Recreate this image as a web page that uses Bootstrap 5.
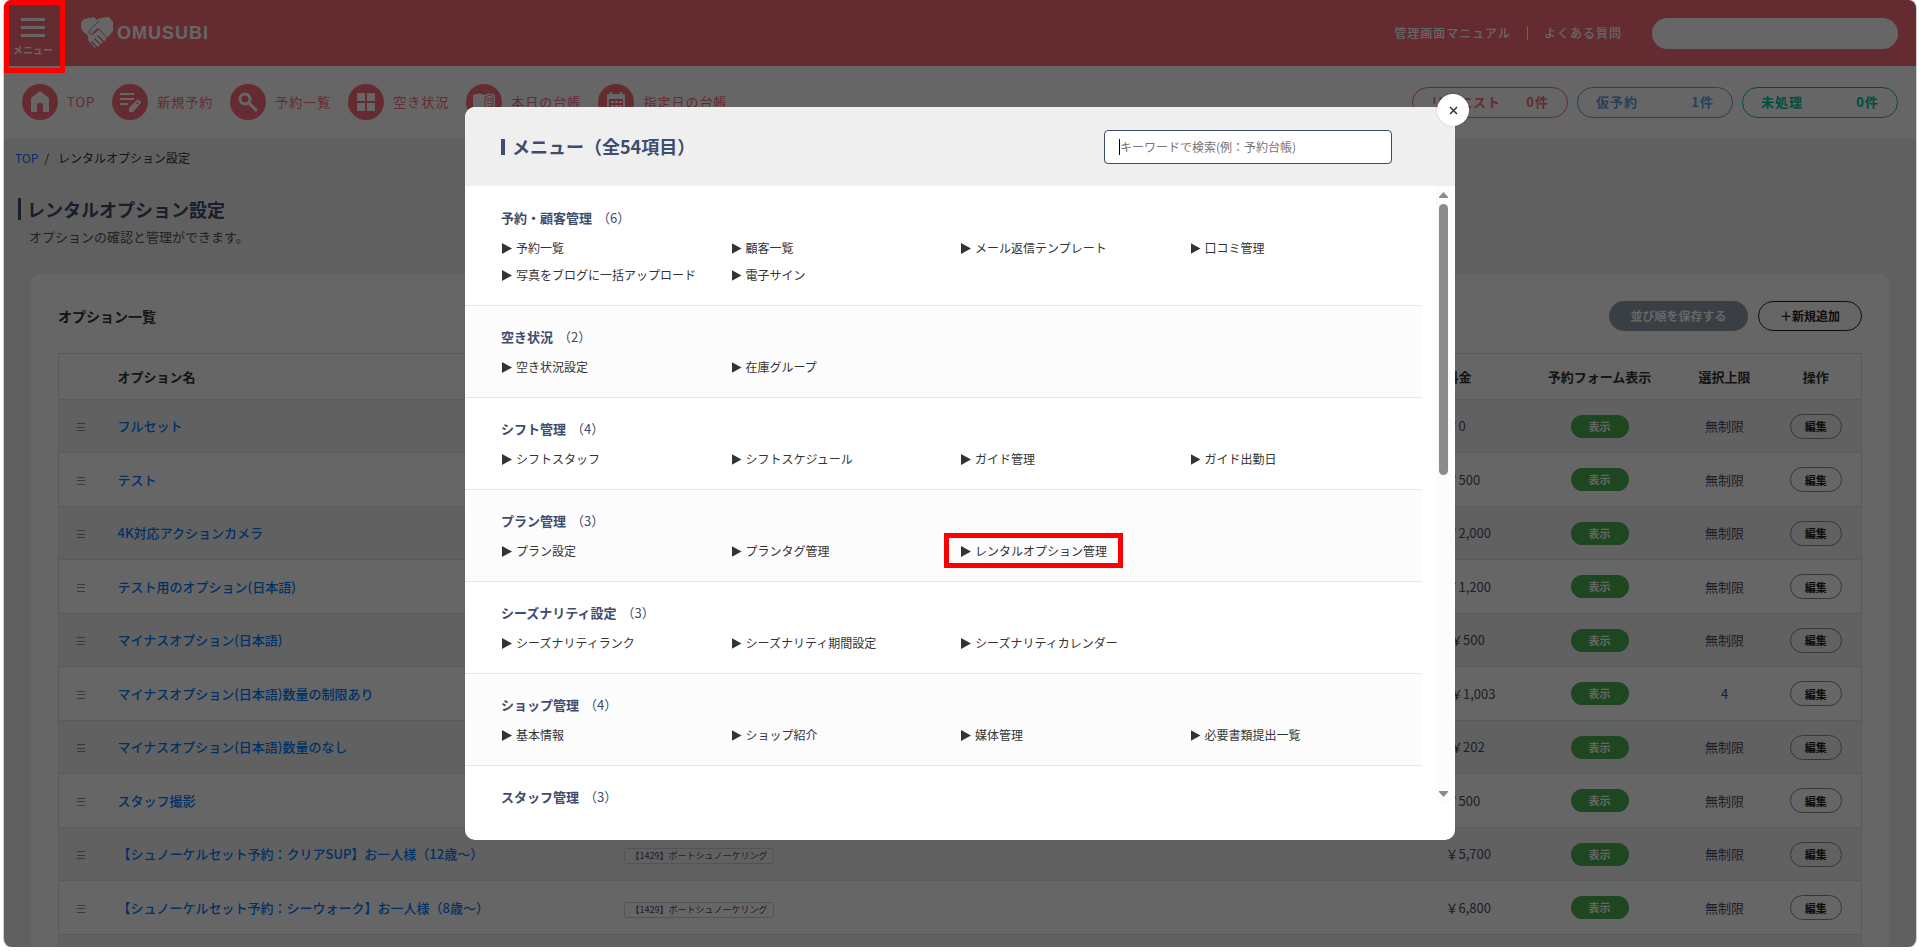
<!DOCTYPE html>
<html lang="ja">
<head>
<meta charset="utf-8">
<meta name="viewport" content="width=device-width, initial-scale=1">
<title>レンタルオプション設定</title>
<link href="https://cdn.jsdelivr.net/npm/bootstrap@5.3.0/dist/css/bootstrap.min.css" rel="stylesheet">
<style>
:root{--brand:#fa6c78;--navy:#3e4c6d}
body{font-family:"Noto Sans CJK JP","Noto Sans",sans-serif;font-size:13px;line-height:20px;color:#333;background:#fff;overflow:hidden}
a{text-decoration:none}
.app-window{height:calc(100vh - 4px);margin:0 4px;border-radius:8px;box-shadow:0 0 0 1px #d0d0d0;background:#f0f0f0}
/* top bar */
.topbar{height:66px;background:var(--brand);color:#fff;padding:0 18px 0 6px}
.menu-btn{width:46px;font-size:10px;line-height:14px;font-weight:700;color:#fff;gap:6px}
.menu-bars{gap:5px}
.menu-bars i{display:block;width:24px;height:3px;background:#fff}
.brand-link{gap:4px;color:#fff;font:700 18px/24px "Liberation Sans",sans-serif;letter-spacing:1px}
.top-links{font-size:12px;letter-spacing:1px;font-weight:500}
.top-links a{color:#fff}
.top-links .sep{width:1px;height:14px;background:#fff}
.account-box{width:246px;height:31px;margin-left:30px;background:#fff}
/* quick navigation */
.quickbar{height:72px;background:#fff;padding:0 18px}
.quick-list{gap:17px}
.quick-link{color:var(--brand);letter-spacing:1px;gap:9px}
.quick-icon{width:36px;height:36px;background:var(--brand)}
.status-list{gap:9px}
.status-pill{width:156px;height:31px;border:1px solid;padding:0 18px;font-weight:700;letter-spacing:1px}
.st-request{color:var(--brand)}.st-hold{color:#5fa4e6}.st-todo{color:#00c0a0}
/* page head */
.crumbs{font-size:12px;padding:10px 11px 0}
.crumbs .slash{margin:0 9px 0 6px}
.crumbs a,.name-link{color:#007bff}
.page-head{padding:30px 14px 0}
.page-head h1{font-size:18px;line-height:22px;font-weight:700;color:var(--navy);border-left:3px solid;padding-left:6px;margin:0 0 7px}
.page-head p{padding-left:11px;margin:0 0 27px;color:#555}
/* list card */
.list-card{margin:0 27px;padding:27px 27px 0;background:#fff;border-radius:9px}
.list-card h2{font-size:14px;line-height:30px;font-weight:700;margin:0}
.card-actions{gap:10px}
.btn-save,.btn-add{height:30px;font-size:12px;line-height:20px;font-weight:700;padding:0}
.btn-save{width:139px;background:#8e9daa;color:#fff}
.btn-add{width:104px;border:1px solid #222;color:#222}
.opt-table{table-layout:fixed;margin-top:22px;border:1px solid #dee2e6}
.opt-table th,.opt-table td{padding:0 18px;border-bottom:1px solid #dee2e6;white-space:nowrap;vertical-align:middle}
.opt-table th{height:46px;font-weight:700;color:#333}
.opt-table td{height:53px;color:#4a5068}
.opt-table tbody tr:nth-child(even) td{height:54px}
.opt-table tbody tr:nth-child(odd){background:#f2f2f2}
.opt-table .ctr{padding:0;text-align:center}
.c-grip{width:41px}.c-name{width:506px}.c-price{width:93px}.c-show{width:158px}.c-max{width:92px}.c-op{width:91px}
.grip{width:8px;height:8px;border-top:1px solid #8890a0;border-bottom:1px solid #8890a0;background:linear-gradient(#8890a0,#8890a0) center/100% 1px no-repeat;margin-top:2px}
.name-link{font-weight:500}
.shown{width:58px;height:23px;line-height:23px;background:#4caf50;color:#fff;font-size:11px;font-weight:700}
.btn-edit{width:52px;height:25px;padding:0;border:1px solid #888;font-size:11px;line-height:20px;font-weight:700;color:#222}
.plan-tag{font-size:9px;line-height:14px;border:1px solid #c9d1d6;border-radius:3px;padding:0 6px}
/* menu dialog */
.shade{background:rgba(0,0,0,.6)}
.menu-dialog{width:990px;height:calc(100vh - 218px);background:#fff;border-radius:10px}
.dialog-head{height:79px;background:#efefef;border-radius:10px 10px 0 0;padding:0 63px 0 36px}
.dialog-head h2{font-size:18px;font-weight:700;color:var(--navy);margin:0;gap:7px}
.dialog-head h2::before{content:"";width:4px;height:16px;background:var(--navy)}
.search-input{width:288px;height:34px;font-size:12px;border:1px solid var(--navy);border-radius:4px;padding:0 15px}
.search-input:focus{border-color:var(--navy);box-shadow:none}
.search-input::placeholder{color:#757575}
.caret{left:15px;top:9px;width:1px;height:16px;background:#000}
.close-btn{top:-13px;right:-14px;width:32px;height:32px;background:#fff;box-shadow:0 0 2px rgba(0,0,0,.2)}
.dialog-body{min-height:0;margin-bottom:30px;padding-top:1px}
.menu-group{padding:21px 3px 17px 36px;border-bottom:1px solid #e6e6e6}
.menu-group:nth-child(even){background:#fcfcfc}
.menu-group h3{font-size:13px;line-height:20px;font-weight:700;color:var(--navy);margin:0 0 6px}
.menu-group h3 span{font-weight:400;margin-left:5px}
.menu-grid{display:grid;grid-template-columns:repeat(4,1fr)}
.menu-grid a{font-size:12px;line-height:27px;color:#333;white-space:nowrap;justify-self:start;position:relative}
.menu-grid a::before{content:"";display:inline-block;width:10px;height:11px;margin:0 4px 0 1px;background:currentColor;clip-path:polygon(0 0,100% 50%,0 100%);vertical-align:-1px}
.picked::after{content:"";position:absolute;inset:-4px -16px;border:5px solid red}
.scroll-rail{width:15px;margin:0 4px 8px 14px;background:#fcfcfc;padding:5px 0}
.scroll-thumb{width:9px;height:271px;background:#8b8b8b;margin-top:6px}
.menu-mark{top:0;left:0;width:61px;height:73px;border:5px solid red}
</style>
</head>
<body>
<div class="app-window position-relative overflow-hidden">
  <header class="topbar d-flex align-items-center">
    <button type="button" class="menu-btn btn p-0 border-0 rounded-0 d-flex flex-column align-items-center mt-2">
      <span class="menu-bars d-flex flex-column"><i></i><i></i><i></i></span>
      <span>メニュー</span>
    </button>
    <a href="#" class="brand-link d-flex align-items-center ms-4">
      <svg width="33" height="32" viewBox="0 0 33 32" aria-hidden="true">
        <path fill="#fff" d="M1 5 4 2 14 0 17 3 20 1 29 0 33 5V14L27 20 18 11 14 14Q12 16 10 14L17 6 16 5 5 16Q1 13 1 9Z"/>
        <path fill="#fff" d="M18 4 21 2 29 1 33 6 32 15 27 21 24 18 28 13 29 8 25 5 20 6 12 15 15 16 19 12 26 20 26 23 24 24 18 18 17 19 23 25 21 27 15 21 14 22 20 28 18 30 12 24 11 25 16 30 15 31 8 23 8 19 4 15 3 9Z"/>
        <path fill="none" stroke="#fa6c78" stroke-width="1" d="M19 4 9 14Q9 18 13 17L19 12 27 21"/>
      </svg>OMUSUBI
    </a>
    <nav class="top-links d-flex align-items-center ms-auto">
      <a href="#">管理画面マニュアル</a><span class="sep mx-3"></span><a href="#">よくある質問</a>
    </nav>
    <div class="account-box rounded-pill"></div>
  </header>

  <div class="quickbar d-flex align-items-center justify-content-between">
    <nav class="quick-list d-flex">
      <a href="#" class="quick-link d-flex align-items-center"><span class="quick-icon rounded-circle d-flex"><svg class="m-auto" width="20" height="22" viewBox="0 0 20 22"><path fill="#fff" d="M10 0 1 7V21H7V14Q7 12 9 12H11Q13 12 13 14V21H19V7Z"/></svg></span>TOP</a>
      <a href="#" class="quick-link d-flex align-items-center"><span class="quick-icon rounded-circle d-flex"><svg class="m-auto" width="22" height="22" viewBox="0 0 22 22"><path stroke="#fff" stroke-width="2" d="M1 3H15M1 8H15M1 13H9"/><path fill="#fff" fill-rule="evenodd" d="M10 17 18 9Q20 8 21 10 23 11 21 13L14 21H10ZM18 11 17 12 19 13 20 12Z"/></svg></span>新規予約</a>
      <a href="#" class="quick-link d-flex align-items-center"><span class="quick-icon rounded-circle d-flex"><svg class="m-auto" width="20" height="20" viewBox="0 0 20 20" fill="none" stroke="#fff" stroke-width="3"><circle cx="7" cy="7" r="5"/><path d="m11 11 8 8"/></svg></span>予約一覧</a>
      <a href="#" class="quick-link d-flex align-items-center"><span class="quick-icon rounded-circle d-flex"><svg class="m-auto" width="18" height="18" viewBox="0 0 18 18" fill="#fff"><path d="M0 0H8V8H0ZM10 0H18V8H10ZM0 10H8V18H0ZM10 10H18V18H10Z"/></svg></span>空き状況</a>
      <a href="#" class="quick-link d-flex align-items-center"><span class="quick-icon rounded-circle d-flex"><svg class="m-auto" width="22" height="18" viewBox="0 0 22 18"><path fill="#fff" d="M0 2Q6-1 11 2 16-1 22 2V17Q16 14 11 17 6 14 0 17Z"/><path fill="none" stroke="#fa6c78" d="M12 4Q16 1 20 3V14Q16 12 12 15ZM14 6Q16 5 19 6M14 8Q16 7 19 8M14 11Q16 10 19 11"/></svg></span>本日の台帳</a>
      <a href="#" class="quick-link d-flex align-items-center"><span class="quick-icon rounded-circle d-flex"><svg class="m-auto" width="18" height="20" viewBox="0 0 18 20"><path fill="#fff" d="M3 0H5V2H13V0H15V2H18V20H0V2H3Z"/><path fill="#fa6c78" d="M2 7H16V18H2Z"/><path fill="#fff" d="M4 9H7V11H4ZM8 9H11V11H8ZM12 9H15V11H12ZM4 13H7V15H4ZM8 13H11V15H8ZM12 13H15V15H12Z"/></svg></span>指定日の台帳</a>
    </nav>
    <div class="status-list d-flex">
      <a href="#" class="status-pill st-request rounded-pill d-flex align-items-center justify-content-between"><span>リクエスト</span><span>0件</span></a>
      <a href="#" class="status-pill st-hold rounded-pill d-flex align-items-center justify-content-between"><span>仮予約</span><span>1件</span></a>
      <a href="#" class="status-pill st-todo rounded-pill d-flex align-items-center justify-content-between"><span>未処理</span><span>0件</span></a>
    </div>
  </div>

  <main>
    <div class="crumbs d-flex"><a href="#">TOP</a><span class="slash">/</span><span>レンタルオプション設定</span></div>
    <div class="page-head">
      <h1>レンタルオプション設定</h1>
      <p>オプションの確認と管理ができます。</p>
    </div>
    <section class="list-card">
      <div class="d-flex justify-content-between">
        <h2>オプション一覧</h2>
        <div class="card-actions d-flex">
          <button type="button" class="btn btn-save rounded-pill">並び順を保存する</button>
          <button type="button" class="btn btn-add rounded-pill">＋新規追加</button>
        </div>
      </div>
      <table class="opt-table w-100">
        <thead><tr><th class="c-grip"></th><th class="c-name">オプション名</th><th></th><th class="c-price">料金</th><th class="c-show ctr">予約フォーム表示</th><th class="c-max ctr">選択上限</th><th class="c-op ctr">操作</th></tr></thead>
        <tbody>
          <tr><td><div class="grip"></div></td><td><a class="name-link" href="#">フルセット</a></td><td></td><td>￥0</td><td class="ctr"><span class="shown rounded-pill d-inline-block">表示</span></td><td class="ctr">無制限</td><td class="ctr"><button type="button" class="btn btn-edit rounded-pill">編集</button></td></tr>
          <tr><td><div class="grip"></div></td><td><a class="name-link" href="#">テスト</a></td><td></td><td>￥500</td><td class="ctr"><span class="shown rounded-pill d-inline-block">表示</span></td><td class="ctr">無制限</td><td class="ctr"><button type="button" class="btn btn-edit rounded-pill">編集</button></td></tr>
          <tr><td><div class="grip"></div></td><td><a class="name-link" href="#">4K対応アクションカメラ</a></td><td></td><td>￥2,000</td><td class="ctr"><span class="shown rounded-pill d-inline-block">表示</span></td><td class="ctr">無制限</td><td class="ctr"><button type="button" class="btn btn-edit rounded-pill">編集</button></td></tr>
          <tr><td><div class="grip"></div></td><td><a class="name-link" href="#">テスト用のオプション(日本語)</a></td><td></td><td>￥1,200</td><td class="ctr"><span class="shown rounded-pill d-inline-block">表示</span></td><td class="ctr">無制限</td><td class="ctr"><button type="button" class="btn btn-edit rounded-pill">編集</button></td></tr>
          <tr><td><div class="grip"></div></td><td><a class="name-link" href="#">マイナスオプション(日本語)</a></td><td></td><td>-￥500</td><td class="ctr"><span class="shown rounded-pill d-inline-block">表示</span></td><td class="ctr">無制限</td><td class="ctr"><button type="button" class="btn btn-edit rounded-pill">編集</button></td></tr>
          <tr><td><div class="grip"></div></td><td><a class="name-link" href="#">マイナスオプション(日本語)数量の制限あり</a></td><td></td><td>-￥1,003</td><td class="ctr"><span class="shown rounded-pill d-inline-block">表示</span></td><td class="ctr">4</td><td class="ctr"><button type="button" class="btn btn-edit rounded-pill">編集</button></td></tr>
          <tr><td><div class="grip"></div></td><td><a class="name-link" href="#">マイナスオプション(日本語)数量のなし</a></td><td></td><td>-￥202</td><td class="ctr"><span class="shown rounded-pill d-inline-block">表示</span></td><td class="ctr">無制限</td><td class="ctr"><button type="button" class="btn btn-edit rounded-pill">編集</button></td></tr>
          <tr><td><div class="grip"></div></td><td><a class="name-link" href="#">スタッフ撮影</a></td><td></td><td>￥500</td><td class="ctr"><span class="shown rounded-pill d-inline-block">表示</span></td><td class="ctr">無制限</td><td class="ctr"><button type="button" class="btn btn-edit rounded-pill">編集</button></td></tr>
          <tr><td><div class="grip"></div></td><td><a class="name-link" href="#">【シュノーケルセット予約：クリアSUP】お一人様（12歳〜）</a></td><td><span class="plan-tag d-inline-block">【1429】ボートシュノーケリング</span></td><td>￥5,700</td><td class="ctr"><span class="shown rounded-pill d-inline-block">表示</span></td><td class="ctr">無制限</td><td class="ctr"><button type="button" class="btn btn-edit rounded-pill">編集</button></td></tr>
          <tr><td><div class="grip"></div></td><td><a class="name-link" href="#">【シュノーケルセット予約：シーウォーク】お一人様（8歳〜）</a></td><td><span class="plan-tag d-inline-block">【1429】ボートシュノーケリング</span></td><td>￥6,800</td><td class="ctr"><span class="shown rounded-pill d-inline-block">表示</span></td><td class="ctr">無制限</td><td class="ctr"><button type="button" class="btn btn-edit rounded-pill">編集</button></td></tr>
          <tr><td colspan="7"></td></tr>
        </tbody>
      </table>
    </section>
  </main>

  <div class="shade position-absolute top-0 start-0 w-100 h-100 d-flex align-items-center justify-content-center">
    <div class="menu-mark position-absolute"></div>
    <div class="menu-dialog position-relative d-flex flex-column" role="dialog" aria-label="メニュー">
      <button type="button" class="close-btn btn p-0 border-0 rounded-circle position-absolute d-flex align-items-center justify-content-center" aria-label="閉じる">
        <svg width="9" height="9" viewBox="0 0 9 9" stroke="#333" stroke-width="1.500"><path d="M1 1 8 8M8 1 1 8"/></svg>
      </button>
      <div class="dialog-head d-flex align-items-center justify-content-between">
        <h2 class="d-flex align-items-center">メニュー（全54項目）</h2>
        <div class="position-relative">
          <input type="text" class="search-input form-control" aria-label="キーワードで検索" placeholder="キーワードで検索(例：予約台帳)">
          <span class="caret position-absolute"></span>
        </div>
      </div>
      <div class="dialog-body d-flex flex-grow-1">
        <div class="flex-grow-1 overflow-hidden">
          <section class="menu-group"><h3>予約・顧客管理<span>（6）</span></h3>
            <div class="menu-grid"><a href="#">予約一覧</a><a href="#">顧客一覧</a><a href="#">メール返信テンプレート</a><a href="#">口コミ管理</a><a href="#">写真をブログに一括アップロード</a><a href="#">電子サイン</a></div></section>
          <section class="menu-group"><h3>空き状況<span>（2）</span></h3>
            <div class="menu-grid"><a href="#">空き状況設定</a><a href="#">在庫グループ</a></div></section>
          <section class="menu-group"><h3>シフト管理<span>（4）</span></h3>
            <div class="menu-grid"><a href="#">シフトスタッフ</a><a href="#">シフトスケジュール</a><a href="#">ガイド管理</a><a href="#">ガイド出勤日</a></div></section>
          <section class="menu-group"><h3>プラン管理<span>（3）</span></h3>
            <div class="menu-grid"><a href="#">プラン設定</a><a href="#">プランタグ管理</a><a href="#" class="picked">レンタルオプション管理</a></div></section>
          <section class="menu-group"><h3>シーズナリティ設定<span>（3）</span></h3>
            <div class="menu-grid"><a href="#">シーズナリティランク</a><a href="#">シーズナリティ期間設定</a><a href="#">シーズナリティカレンダー</a></div></section>
          <section class="menu-group"><h3>ショップ管理<span>（4）</span></h3>
            <div class="menu-grid"><a href="#">基本情報</a><a href="#">ショップ紹介</a><a href="#">媒体管理</a><a href="#">必要書類提出一覧</a></div></section>
          <section class="menu-group border-0 pb-0"><h3 class="mb-0">スタッフ管理<span>（3）</span></h3></section>
        </div>
        <div class="scroll-rail d-flex flex-column align-items-center flex-shrink-0">
          <svg width="9" height="6" viewBox="0 0 9 6" fill="#8b8b8b"><path d="M4.500 0 9 5V6H0V5Z"/></svg>
          <div class="scroll-thumb rounded-pill"></div>
          <svg class="mt-auto" width="9" height="6" viewBox="0 0 9 6" fill="#8b8b8b"><path d="M4.500 6 9 1V0H0V1Z"/></svg>
        </div>
      </div>
    </div>
  </div>
</div>
<script src="https://cdn.jsdelivr.net/npm/bootstrap@5.3.0/dist/js/bootstrap.bundle.min.js"></script>
</body>
</html>
